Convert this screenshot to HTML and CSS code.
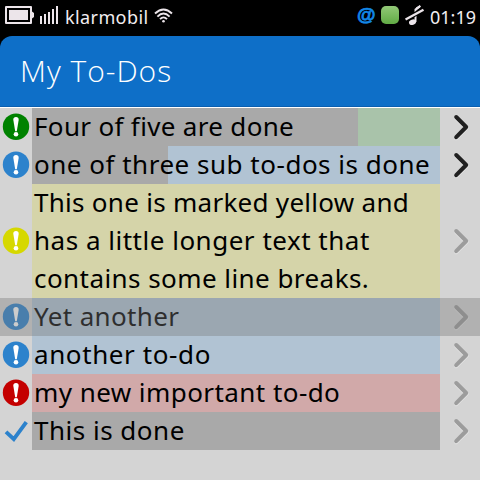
FILE: index.html
```html
<!DOCTYPE html>
<html lang="en">
<head>
<meta charset="utf-8">
<title>My To-Dos</title>
<link rel="stylesheet" href="styles.css">
</head>
<body>
<svg class="defs" width="0" height="0">
  <symbol id="mark" viewBox="0 0 32 38">
    <circle cx="16" cy="18.7" r="13.2" fill="currentColor"/>
    <path d="M13.300 11.800a2.700 2.700 0 0 1 5.400 0L16.800 23.200h-1.600z" fill="#fff"/>
    <circle cx="16" cy="26.200" r="2.300" fill="#fff"/>
  </symbol>
  <symbol id="check" viewBox="0 0 32 38">
    <path d="M6 19.800l7.800 7.300L26.300 10.200" fill="none" stroke="currentColor" stroke-width="3.900"/>
  </symbol>
  <symbol id="next" viewBox="0 0 40 38">
    <path d="M16.200 9l10 10L16.200 29.200" transform="translate(0 1)" fill="none" stroke="#e6e6e6" stroke-width="4" stroke-linecap="round"/>
    <path d="M16.200 9l10 10L16.200 29.200" fill="none" stroke="currentColor" stroke-width="4" stroke-linecap="round" stroke-linejoin="round"/>
  </symbol>
</svg>
<div class="status">
  <svg class="battery" width="30" height="20" viewBox="0 0 30 20"><path d="M1 1h25v16H1z" fill="none" stroke="#ece5ea" stroke-width="2" stroke-linejoin="round"/><path d="M4 4h19v10H4zM27 5.500l2 1.500v4l-2 1.500z" fill="#ece5ea"/></svg>
  <svg class="signal" width="20" height="20" viewBox="0 0 20 20"><path d="M1 10v8M5 8v10M9 6v12M13 3v15M17 0v18" stroke="#ece5ea" stroke-width="2"/></svg>
  <span class="carrier">klarmobil</span>
  <svg class="wifi" width="20" height="16" viewBox="0 0 20 16"><g fill="none" stroke="#ece5ea" stroke-width="1.900"><path d="M1 5.500Q9.500-2.500 18 5.500M3.400 8.600Q9.500 2.600 15.600 8.600M6 11.200Q9.500 7.600 13 11.200"/></g><circle cx="9.500" cy="13.300" r="1.300" fill="#ece5ea"/></svg>
  <span class="at">@</span>
  <span class="online"></span>
  <svg class="silent" width="20" height="22" viewBox="0 0 20 22"><path d="M10.500 17V4.500L15.500 1" fill="none" stroke="#ece5ea" stroke-width="2"/><path d="M10 6.500l5-4V0l-4 2.500z" fill="#ece5ea"/><ellipse cx="7.500" cy="17.200" rx="3.600" ry="2.600" fill="#ece5ea" transform="rotate(-20 7.500 17.200)"/><path d="M1 14.500L18 4.500" stroke="#000" stroke-width="4.500"/><path d="M.5 14.500L18.500 4.800" stroke="#ece5ea" stroke-width="2.400"/></svg>
  <span class="clock">01:19</span>
</div>
<header class="header"><h1>My To-Dos</h1></header>
<ul class="list">
  <li class="row green"><svg class="icon"><use href="#mark"/></svg><div class="body" style="--done:79.900%"><span class="l1">Four of five are done</span></div><svg class="arrow active"><use href="#next"/></svg></li>
  <li class="row blue"><svg class="icon"><use href="#mark"/></svg><div class="body" style="--done:33.330%"><span class="l2">one of three sub to-dos is done</span></div><svg class="arrow active"><use href="#next"/></svg></li>
  <li class="row yellow"><svg class="icon"><use href="#mark"/></svg><div class="body"><span class="l3">This one is marked yellow and</span><span class="l4">has a little longer text that</span><span class="l5">contains some line breaks.</span></div><svg class="arrow"><use href="#next"/></svg></li>
  <li class="row blue pressed"><svg class="icon"><use href="#mark"/></svg><div class="body"><span class="l6">Yet another</span></div><svg class="arrow"><use href="#next"/></svg></li>
  <li class="row blue"><svg class="icon"><use href="#mark"/></svg><div class="body"><span class="l7">another to-do</span></div><svg class="arrow"><use href="#next"/></svg></li>
  <li class="row red"><svg class="icon"><use href="#mark"/></svg><div class="body"><span class="l8">my new important to-do</span></div><svg class="arrow"><use href="#next"/></svg></li>
  <li class="row done"><svg class="icon"><use href="#check"/></svg><div class="body"><span class="l9">This is done</span></div><svg class="arrow"><use href="#next"/></svg></li>
</ul>
</body>
</html>
```
FILE: styles.css
```css
* { box-sizing: border-box; }
body {
  margin: 0;
  width: 480px;
  height: 480px;
  overflow: hidden;
  display: flex;
  flex-direction: column;
  background: #000;
  font-family: "Noto Sans", "Open Sans", sans-serif;
}
.defs { position: absolute; }
.status {
  height: 36px;
  flex: none;
  display: flex;
  align-items: flex-start;
  padding: 6px 0 0 5px;
  color: #f2eef1;
  font-size: 18px;
  line-height: 22px;
  white-space: nowrap;
}
.battery { margin-right: 5px; }
.signal { margin-right: 5px; }
.carrier { width: 84px; letter-spacing: .4px; }
.wifi { margin: 2px 0 0 5px; }
.at {
  width: 20px;
  margin-left: 183px;
  margin-top: -3px;
  color: #1288e8;
  font-family: "Liberation Sans", sans-serif;
  font-weight: 700;
  font-size: 19px;
  line-height: 24px;
  -webkit-text-stroke: .7px #1288e8;
}
.online {
  width: 18px;
  height: 18px;
  margin-left: 4px;
  border-radius: 5px;
  background: linear-gradient(#92c877, #61ab45);
}
.silent { margin: -1px 0 0 6px; }
.clock { margin-left: 5px; }
.header {
  height: 72px;
  flex: none;
  padding-left: 20px;
  background: #0e6fc8;
  border-bottom: 1px solid #fff;
  border-radius: 12px 12px 0 0;
  box-shadow: inset 0 -1px #0a5fb0;
}
.header h1 {
  margin: 0;
  color: #fff;
  font-family: "Open Sans", "Noto Sans", sans-serif;
  font-weight: 300;
  font-size: 30px;
  line-height: 69px;
  letter-spacing: 1px;
}
.list {
  flex: 1;
  margin: 0;
  padding: 0;
  list-style: none;
  background: #d4d4d4;
}
.row {
  display: grid;
  grid-template-columns: 32px 408px 40px;
  align-items: center;
  position: relative;
}
.icon { width: 32px; height: 38px; }
.arrow { width: 40px; height: 38px; color: #9c9c9c; }
.arrow.active { color: #202020; }
.body {
  --done: 0%;
  padding: 0 0 2px 2px;
  background: linear-gradient(to right, #a9a9a9 var(--done), var(--tint) var(--done));
  color: #000;
  font-size: 26px;
  line-height: 38px;
  white-space: nowrap;
}
.body span { display: block; width: max-content; }
.body span:first-child { margin-top: -1px; }
.body span:last-child { margin-bottom: -1px; }
.l1 { letter-spacing: .33px; }
.l2 { letter-spacing: .51px; }
.l3 { letter-spacing: .28px; }
.l4 { letter-spacing: .51px; }
.l5 { letter-spacing: .44px; }
.l6 { letter-spacing: .35px; }
.l7 { letter-spacing: .6px; }
.l8 { letter-spacing: .44px; }
.l9 { letter-spacing: .5px; }
.green { color: #008200; --tint: #a9c3aa; }
.blue { color: #2c82cc; --tint: #b1c3d3; }
.yellow { color: #d6d800; --tint: #d5d4a9; }
.red { color: #c40000; --tint: #d1a9a9; }
.done { color: #2c82cc; --tint: #a9a9a9; }
.pressed::after {
  content: "";
  position: absolute;
  inset: 0;
  background: rgba(122, 122, 122, .38);
}
```
